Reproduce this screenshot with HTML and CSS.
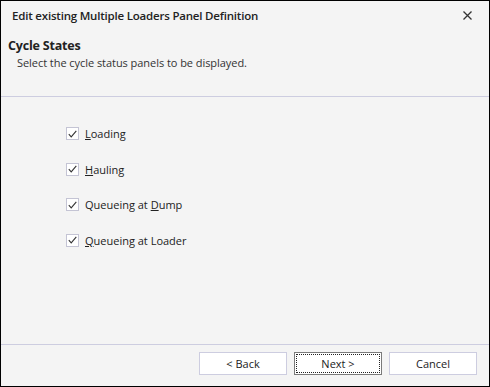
FILE: index.html
```html
<!DOCTYPE html>
<html>
<head>
<meta charset="utf-8">
<link rel="stylesheet" href="styles.css">
</head>
<body>
<div class="dialog">
  <div class="titlebar">
    <span class="title">Edit existing Multiple Loaders Panel Definition</span>
    <svg class="close" width="9" height="9" viewBox="0 0 9 9"><path d="M0.5 0.5 L8.5 8.5 M8.5 0.5 L0.5 8.5" stroke="#333" stroke-width="1.3" fill="none"/></svg>
  </div>
  <div class="header">
    <div class="heading">Cycle States</div>
    <div class="subheading">Select the cycle status panels to be displayed.</div>
  </div>
  <div class="content">
    <label class="check"><span class="box"><svg width="9" height="8" viewBox="0 0 9 8"><path d="M0.8 4.2 L3.2 6.8 L8.3 0.8" stroke="#333" stroke-width="1.1" fill="none"/></svg></span><span><u>L</u>oading</span></label>
    <label class="check"><span class="box"><svg width="9" height="8" viewBox="0 0 9 8"><path d="M0.8 4.2 L3.2 6.8 L8.3 0.8" stroke="#333" stroke-width="1.1" fill="none"/></svg></span><span><u>H</u>auling</span></label>
    <label class="check"><span class="box"><svg width="9" height="8" viewBox="0 0 9 8"><path d="M0.8 4.2 L3.2 6.8 L8.3 0.8" stroke="#333" stroke-width="1.1" fill="none"/></svg></span><span>Queueing at <u>D</u>ump</span></label>
    <label class="check"><span class="box"><svg width="9" height="8" viewBox="0 0 9 8"><path d="M0.8 4.2 L3.2 6.8 L8.3 0.8" stroke="#333" stroke-width="1.1" fill="none"/></svg></span><span><u>Q</u>ueueing at Loader</span></label>
  </div>
  <div class="footer">
    <button class="btn">&lt; Back</button>
    <button class="btn default"><span class="focus">Next &gt;</span></button>
    <button class="btn">Cancel</button>
  </div>
</div>
</body>
</html>
```
FILE: styles.css
```css
* { box-sizing: border-box; }
html, body { margin: 0; padding: 0; }
body {
  width: 490px;
  height: 387px;
  font-family: "Open Sans", "Noto Sans", sans-serif;
  color: #1e1e1e;
}
.dialog {
  width: 490px;
  height: 387px;
  border: 1px solid #000;
  background: #f4f4f4;
  display: flex;
  flex-direction: column;
}
.titlebar {
  height: 31px;
  display: flex;
  align-items: center;
  justify-content: space-between;
  padding: 0 17px 2px 11px;
}
.title {
  font-size: 11.5px;
  font-weight: 600;
  letter-spacing: -0.2px;
  color: #222;
}
.header {
  height: 65px;
  border-bottom: 1px solid #cdcde0;
  padding: 5px 0 0 7px;
}
.heading {
  font-size: 12.5px;
  font-weight: 700;
  letter-spacing: -0.2px;
  line-height: 18px;
  color: #222;
}
.subheading {
  font-size: 11px;
  line-height: 15px;
  margin-left: 9px;
  margin-top: 0;
  letter-spacing: -0.05px;
  color: #333;
}
.content {
  flex: 1;
  padding: 30px 0 0 65px;
  display: grid;
  grid-auto-rows: 13px;
  align-content: start;
  row-gap: 22.6px;
}
.check {
  display: flex;
  align-items: center;
  gap: 6px;
  font-size: 11px;
  height: 13px;
  line-height: 13px;
  color: #222;
}
.box {
  flex: none;
  width: 13px;
  height: 13px;
  border: 1px solid #c4c4d4;
  background: #fff;
  display: flex;
  align-items: center;
  justify-content: center;
}
.box svg { display: block; }
.footer {
  height: 42px;
  border-top: 1px solid #cdcde0;
  display: flex;
  justify-content: flex-end;
  align-items: flex-start;
  padding: 7px 12px 0 0;
  gap: 7px;
}
.btn {
  width: 88px;
  height: 23px;
  background: #fff;
  border: 1px solid #cdcde0;
  font-family: inherit;
  font-size: 11px;
  color: #222;
  padding: 0;
  margin: 0;
}
.btn.default {
  border: 1px solid #7a7a7a;
  padding: 1px;
  display: flex;
}
.focus {
  flex: 1;
  border: 1px dotted #222;
  display: flex;
  align-items: center;
  justify-content: center;
}
```
